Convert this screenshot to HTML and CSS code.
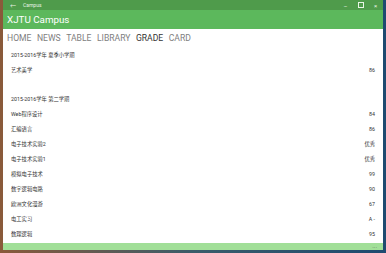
FILE: index.html
```html
<!DOCTYPE html>
<html lang="zh">
<head>
    <meta charset="UTF-8">
    <title>Campus</title>
    <link rel="stylesheet" href="styles.css">
</head>
<body>
    <div class="window">
        <div class="titlebar">
            <span class="back">&#8592;</span>
            <span class="title">Campus</span>
            <span class="controls">
                <span class="ctl">&#8211;</span>
                <span class="ctl box"></span>
                <span class="ctl">&#215;</span>
            </span>
        </div>
        <div class="appbar">XJTU Campus</div>
        <div class="tabs">
            <span>HOME</span>
            <span>NEWS</span>
            <span>TABLE</span>
            <span>LIBRARY</span>
            <span class="active">GRADE</span>
            <span>CARD</span>
        </div>
        <div class="content">
            <div class="term">2015-2016学年 夏季小学期</div>
            <div class="row"><span>艺术美学</span><span>86</span></div>
            <div class="gap"></div>
            <div class="term">2015-2016学年 第二学期</div>
            <div class="row"><span>Web程序设计</span><span>84</span></div>
            <div class="row"><span>汇编语言</span><span>86</span></div>
            <div class="row"><span>电子技术实验2</span><span>优秀</span></div>
            <div class="row"><span>电子技术实验1</span><span>优秀</span></div>
            <div class="row"><span>模拟电子技术</span><span>99</span></div>
            <div class="row"><span>数字逻辑电路</span><span>90</span></div>
            <div class="row"><span>欧洲文化漫游</span><span>67</span></div>
            <div class="row"><span>电工实习</span><span>A -</span></div>
            <div class="row"><span>数理逻辑</span><span>95</span></div>
        </div>
        <div class="cmdbar"><span class="more">&middot;&middot;&middot;</span></div>
    </div>
</body>
</html>
```

FILE: styles.css
```css
html, body {
    margin: 0;
    height: 100%;
}
body {
    background: linear-gradient(90deg, #8a5a3a 0%, #3a5c6a 50%, #1e4a70 100%);
    font-family: Roboto, "Noto Sans CJK SC", sans-serif;
    overflow: hidden;
}
.window {
    margin: 0 3px;
    width: 380px;
    height: 250px;
    background: #fff;
    display: flex;
    flex-direction: column;
    overflow: hidden;
}
.titlebar {
    height: 10px;
    background: #4f9b4b;
    color: #e8f4e6;
    display: flex;
    align-items: center;
    font-size: 5px;
    padding: 0 0 0 7px;
}
.back {
    font-size: 6px;
    width: 13px;
}
.title {
    flex: 1;
}
.controls {
    display: flex;
}
.ctl {
    width: 15px;
    text-align: center;
    font-size: 6px;
}
.ctl.box::before {
    content: "";
    display: inline-block;
    width: 4px;
    height: 4px;
    border: 1px solid #e8f4e6;
}
.appbar {
    height: 19px;
    background: #5cb85c;
    color: #fff;
    font-size: 9.8px;
    line-height: 19px;
    padding-left: 4px;
}
.tabs {
    display: flex;
    gap: 5.5px;
    padding: 2px 0 0 4px;
    height: 14px;
    font-size: 8.6px;
    line-height: 14px;
    color: #808080;
}
.tabs .active {
    color: #333;
}
.content {
    flex: 1;
    padding: 3px 8px 0 8px;
    font-size: 5.3px;
    color: #333;
}
.term, .row {
    height: 15px;
    line-height: 15px;
}
.row {
    display: flex;
    justify-content: space-between;
}
.gap {
    height: 14px;
}
.cmdbar {
    height: 7px;
    background: #a1df98;
    display: flex;
    justify-content: flex-end;
    align-items: center;
    padding-right: 6px;
}
.more {
    font-size: 6px;
    color: #555;
    line-height: 7px;
}
```
